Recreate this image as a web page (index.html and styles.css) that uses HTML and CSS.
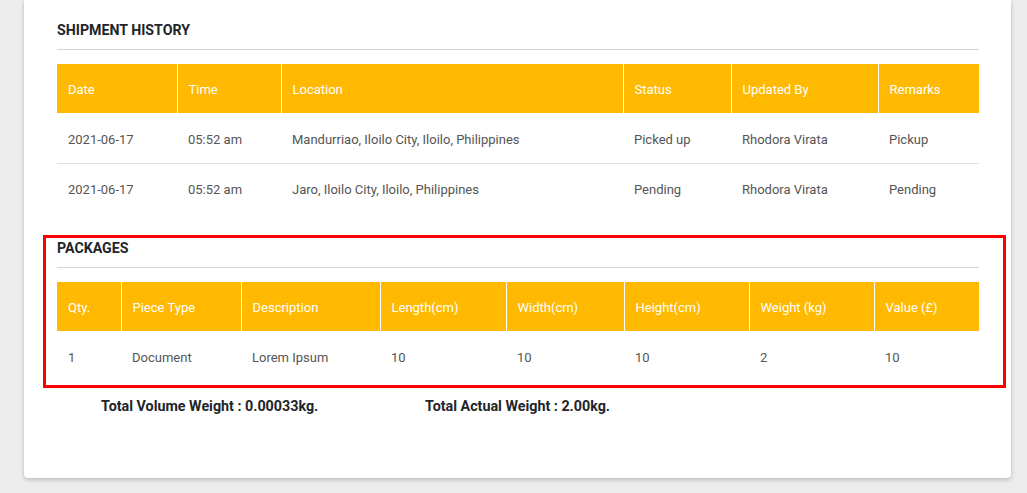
FILE: index.html
```html
<!DOCTYPE html>
<html lang="en">
<head>
<meta charset="utf-8">
<title>Shipment</title>
<link rel="stylesheet" href="styles.css">
</head>
<body>
<div class="page">
  <div class="card">
    <section class="block">
      <h2 class="block-title">SHIPMENT HISTORY</h2>
      <table class="grid history">
        <colgroup>
          <col class="h-date"><col class="h-time"><col class="h-loc"><col class="h-status"><col class="h-by"><col class="h-rem">
        </colgroup>
        <thead>
          <tr><th>Date</th><th>Time</th><th>Location</th><th>Status</th><th>Updated By</th><th>Remarks</th></tr>
        </thead>
        <tbody>
          <tr><td>2021-06-17</td><td>05:52 am</td><td>Mandurriao, Iloilo City, Iloilo, Philippines</td><td>Picked up</td><td>Rhodora Virata</td><td>Pickup</td></tr>
          <tr><td>2021-06-17</td><td>05:52 am</td><td>Jaro, Iloilo City, Iloilo, Philippines</td><td>Pending</td><td>Rhodora Virata</td><td>Pending</td></tr>
        </tbody>
      </table>
    </section>
    <section class="block packages">
      <div class="highlight"></div>
      <h2 class="block-title">PACKAGES</h2>
      <table class="grid">
        <colgroup>
          <col class="p-qty"><col class="p-type"><col class="p-desc"><col class="p-len"><col class="p-wid"><col class="p-hei"><col class="p-wei"><col class="p-val">
        </colgroup>
        <thead>
          <tr><th>Qty.</th><th>Piece Type</th><th>Description</th><th>Length(cm)</th><th>Width(cm)</th><th>Height(cm)</th><th>Weight (kg)</th><th>Value (£)</th></tr>
        </thead>
        <tbody>
          <tr><td>1</td><td>Document</td><td>Lorem Ipsum</td><td>10</td><td>10</td><td>10</td><td>2</td><td>10</td></tr>
        </tbody>
      </table>
    </section>
    <div class="totals">
      <div class="total first">Total Volume Weight : 0.00033kg.</div>
      <div class="total">Total Actual Weight : 2.00kg.</div>
    </div>
  </div>
</div>
</body>
</html>
```

FILE: styles.css
```css
html, body {
  margin: 0;
  padding: 0;
  background: #ececec;
  font-family: Roboto, "Liberation Sans", sans-serif;
}

.page {
  padding: 0 16px 16px 24px;
}

.card {
  background: #fff;
  width: 987px;
  box-sizing: border-box;
  padding: 19px 32px 62px 33px;
  border-radius: 0 0 4px 4px;
  box-shadow: 0 2px 4px rgba(0, 0, 0, 0.18), 0 0 2px rgba(0, 0, 0, 0.08);
}

.block-title {
  margin: 0 0 14px;
  font-size: 14.2px;
  line-height: 20px;
  font-weight: 700;
  color: #212529;
  padding: 1px 0 9px;
  border-bottom: 1px solid #d4d4d4;
}

.packages {
  position: relative;
  margin-top: 24px;
}

.highlight {
  position: absolute;
  top: -2px;
  left: -14px;
  right: -27px;
  bottom: -7px;
  border: 3px solid #ff0000;
  pointer-events: none;
}

.grid {
  width: 922px;
  border-collapse: collapse;
  table-layout: fixed;
  font-size: 13px;
}

.grid th {
  background: #ffb900;
  color: #fff;
  font-weight: 400;
  text-align: left;
  height: 49px;
  padding: 2px 11px 0;
  box-sizing: border-box;
  border-right: 1px solid #fff;
  vertical-align: middle;
}

.grid th:last-child {
  border-right: 0;
}

.grid td {
  color: #555;
  height: 50px;
  padding: 2px 11px 0;
  box-sizing: border-box;
  vertical-align: middle;
}

.history tbody tr:first-child td {
  padding-top: 4px;
}

.grid tbody tr + tr td {
  border-top: 1px solid #dee2e6;
}

.h-date { width: 120px; }
.h-time { width: 104px; }
.h-loc { width: 342px; }
.h-status { width: 108px; }
.h-by { width: 147px; }
.h-rem { width: 101px; }

.p-qty { width: 64px; }
.p-type { width: 120px; }
.p-desc { width: 139px; }
.p-len { width: 126px; }
.p-wid { width: 118px; }
.p-hei { width: 125px; }
.p-wei { width: 125px; }
.p-val { width: 105px; }

.totals {
  display: flex;
  margin-top: 15px;
  padding-left: 44px;
}

.total {
  font-size: 14.3px;
  line-height: 20px;
  font-weight: 700;
  color: #212529;
}

.total.first {
  width: 324px;
}
```
